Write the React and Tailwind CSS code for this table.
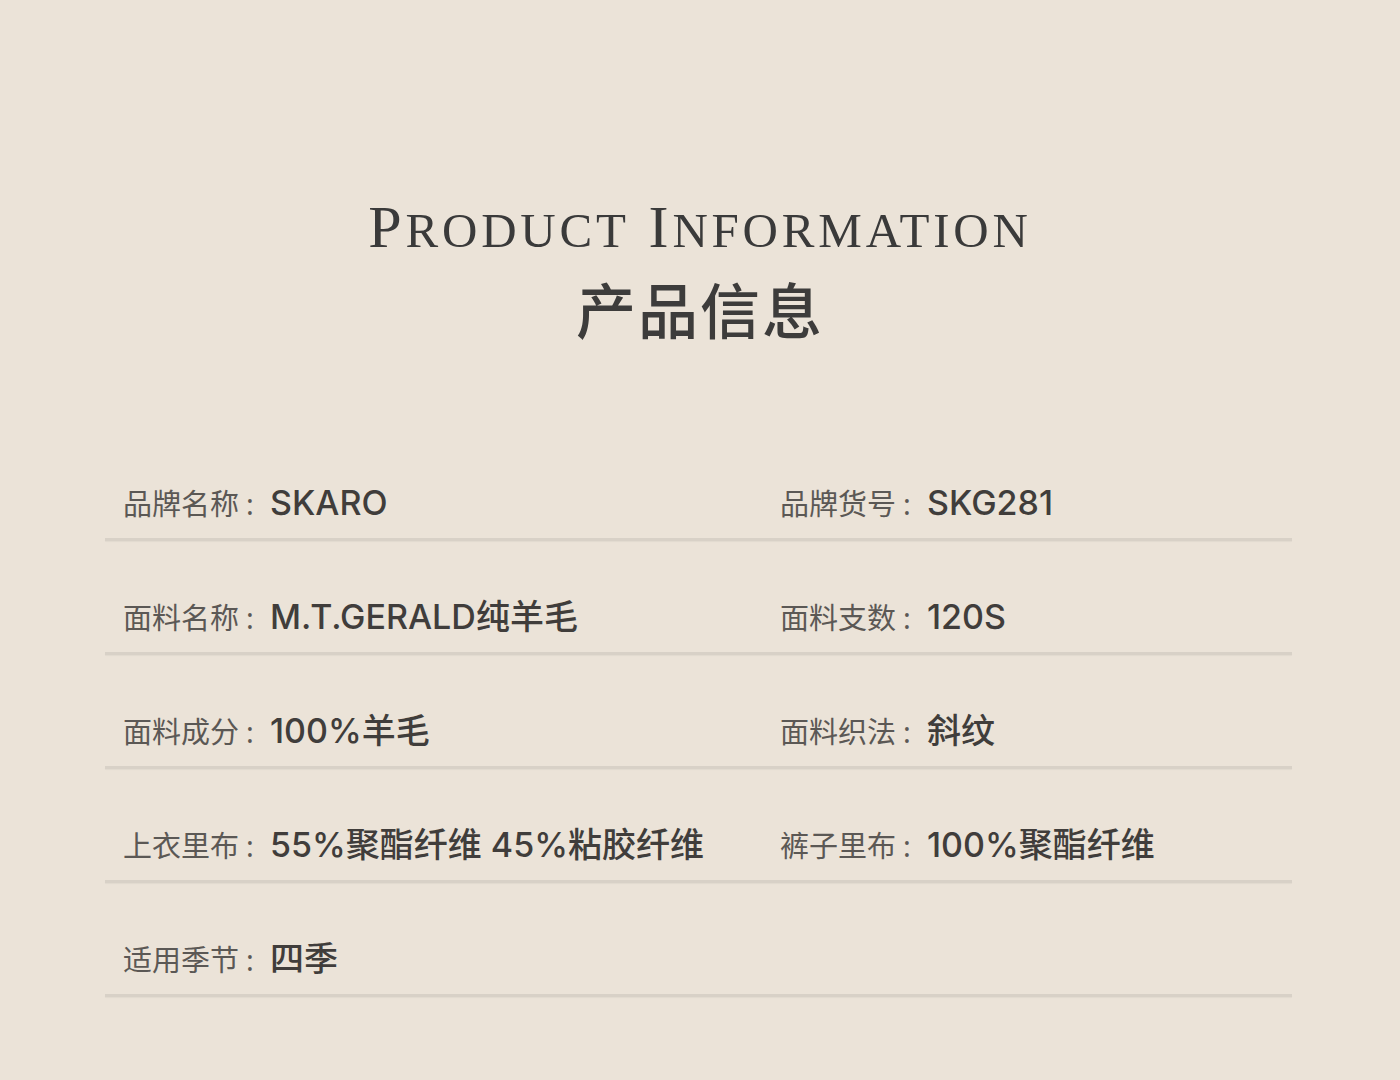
const rows = [
    [
        { label: '品牌名称', value: 'SKARO' },
        { label: '品牌货号', value: 'SKG281' },
    ],
    [
        { label: '面料名称', value: 'M.T.GERALD纯羊毛' },
        { label: '面料支数', value: '120S' },
    ],
    [
        { label: '面料成分', value: '100%羊毛' },
        { label: '面料织法', value: '斜纹' },
    ],
    [
        { label: '上衣里布', value: '55%聚酯纤维 45%粘胶纤维' },
        { label: '裤子里布', value: '100%聚酯纤维' },
    ],
    [{ label: '适用季节', value: '四季' }],
];

const sans = { fontFamily: '"Noto Sans", "Noto Sans CJK SC", sans-serif' };
const valueFont = { fontFamily: 'Inter, "Noto Sans CJK SC", sans-serif' };

function Field({ label, value }) {
    return (
        <div className="flex items-baseline">
            <span className="w-[147px] shrink-0 text-[29px] text-[#5b5855]" style={sans}>
                {label}<span className="ml-[7px]">:</span>
            </span>
            <span className="text-[34px] font-medium text-[#403d3b]" style={valueFont}>
                {value}
            </span>
        </div>
    );
}

export default function App() {
    return (
        <div className="min-h-[1080px] w-[1400px] bg-[#ebe3d8] pt-[192px]">
            <h1
                className="text-center text-[60px] leading-[70px] tracking-[3.8px] text-[#3a3a3a]"
                style={{ fontFamily: '"Liberation Serif", serif' }}
            >
                P<span className="text-[49px]">RODUCT</span> I<span className="text-[49px]">NFORMATION</span>
            </h1>
            <h2
                className="mt-[10px] text-center text-[60px] font-medium leading-[70px] tracking-[2px] text-[#3d3c3b]"
                style={sans}
            >
                产品信息
            </h2>

            <div className="mx-[105px] mt-[81px] w-[1187px]">
                {rows.map((row, i) => (
                    <div key={i}>
                        <div className="grid h-[111px] grid-cols-[657px_1fr] items-end pb-[10px] pl-[18px]">
                            {row.map((f) => (
                                <Field key={f.label} {...f} />
                            ))}
                        </div>
                        <div className="h-[3px] bg-[#d8d1c7] shadow-[0_1px_1px_rgba(0,0,0,0.04)]" />
                    </div>
                ))}
            </div>
        </div>
    );
}
